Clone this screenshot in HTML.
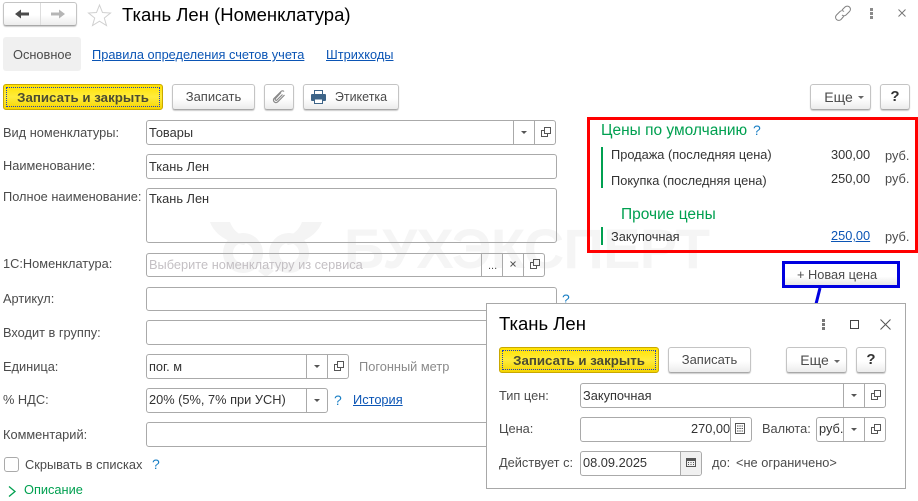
<!DOCTYPE html>
<html lang="ru"><head><meta charset="utf-8"><title>Ткань Лен</title>
<style>
html,body{margin:0;padding:0;background:#fff}
#p{position:relative;width:918px;height:501px;overflow:hidden;background:#fff;font-family:"Liberation Sans",Arial,sans-serif;font-size:12.8px;color:#4b4b4b}
.t{position:absolute;line-height:16px;white-space:nowrap}
.d{color:#333}
.a{color:#0b55b5;text-decoration:underline}
.g{color:#00a050}
.q{color:#1a7fc4;font-size:14px}
.f{position:absolute;box-sizing:border-box;border:1px solid #aaa;border-radius:3px}
.v{position:absolute;width:1px;background:#aaa}
.b{position:absolute;box-sizing:border-box;border:1px solid #c4c4c4;border-bottom:1px solid #a8a8a8;border-radius:3px;background:linear-gradient(#fff 0,#fff 55%,#ececec 100%);box-shadow:0 1px 1px #ccc;text-align:center;line-height:24px;font-size:13px;color:#4b4b4b}
.y{position:absolute;box-sizing:border-box;border:1px solid #c9a800;border-radius:3px;background:linear-gradient(#ffe100,#ffec3d 50%,#f5d400);text-align:center;font-weight:bold;font-size:13.300px;color:#4b4b30;line-height:20px}
.y i{position:absolute;left:2px;right:2px;top:2px;bottom:2px;border:1px dotted #1f3fc0;font-style:normal}
svg{position:absolute;overflow:visible}
</style></head><body><div id="p">

<!-- watermark -->
<svg style="left:0;top:0" width="918" height="501" fill="none">
<g stroke="#f4f4f4" stroke-width="10"><circle cx="243" cy="253" r="15"/><circle cx="289" cy="253" r="15"/></g>
<path d="M210 222h20c4 10 10 13 20 17l-6 6c-17-3-29-10-34-23zM322 222h-20c-4 10-10 13-20 17l6 6c17-3 29-10 34-23zM266 264l8 7-8 6-8-6z" fill="#f4f4f4"/>
<text x="344" y="268" font-family="Liberation Sans" font-weight="bold" font-size="56" fill="#f5f5f5" textLength="366">БУХЭКСПЕРТ</text>
</svg>

<!-- top nav -->
<div class="b" style="left:3px;top:2px;width:74px;height:24px"></div>
<div class="v" style="left:40px;top:3px;height:22px;background:#ddd"></div>
<svg style="left:15px;top:9px" width="15" height="10"><path d="M0 5l6-4.500V3.500h8v3H6v3z" fill="#4a4a4a"/></svg>
<svg style="left:51px;top:9px" width="15" height="10"><path d="M14 5L8 .5V3.500H0v3h8v3z" fill="#b5b5b5"/></svg>
<svg style="left:88px;top:4px" width="24" height="22"><path d="M11.500 1l3 7.500 8 .5-6.200 5 2.200 7.500-7-4.300-7 4.300L6.700 14 .5 9l8-.5z" fill="#fff" stroke="#d0d0d0"/></svg>
<div class="t" style="left:122px;top:4px;font-size:18.500px;line-height:22px;color:#000">Ткань Лен (Номенклатура)</div>

<svg style="left:835px;top:5px" width="16" height="17" fill="none" stroke="#808080"><path d="M7 5l3-3a3 3 0 0 1 4.500 4.500l-3.500 3.500a3 3 0 0 1-4 0M9 11l-3 3.500A3 3 0 0 1 1.500 10L5 6.500a3 3 0 0 1 4 0"/></svg>
<svg style="left:870px;top:8px" width="5" height="12"><g fill="#8a8a8a"><rect x="0" y="0" width="3" height="3"/><rect x="0" y="4" width="3" height="3"/><rect x="0" y="8" width="3" height="3"/></g></svg>
<svg style="left:898px;top:9px" width="9" height="9" stroke="#777" fill="none"><path d="M.5.500l7 7M7.500.500l-7 7"/></svg>

<!-- tabs -->
<div style="position:absolute;left:3px;top:37px;width:78px;height:34px;background:#f0f0f0;border-radius:3px"></div>
<div class="t" style="left:13px;top:47px;">Основное</div>
<div class="t a" style="left:92px;top:47px">Правила определения счетов учета</div>
<div class="t a" style="left:326px;top:47px">Штрихкоды</div>

<!-- command bar -->
<div class="y" style="left:3px;top:84px;width:160px;height:26px"><i>Записать и закрыть</i></div>
<div class="b" style="left:172px;top:84px;width:83px;height:26px">Записать</div>
<div class="b" style="left:264px;top:84px;width:30px;height:26px"></div>
<svg style="left:272px;top:90px" width="14" height="14" fill="none" stroke="#8a8a8a" stroke-width="1.200"><path d="M12 1.500a2 2 0 0 0-3 0L2 8.500a2.500 2.500 0 0 0 3.500 3.500L12.500 5M9 2.500L3.500 8.500a1 1 0 0 0 1.500 1.500L10.500 4.500a1 1 0 0 1 0 0"/></svg>
<div class="b" style="left:303px;top:84px;width:96px;height:26px;padding-left:20px;font-size:12.500px">Этикетка</div>
<svg style="left:311px;top:90px" width="15" height="14"><path d="M3.500.5h8v4h-8z" fill="#fff" stroke="#3d6488"/><rect x="0" y="4" width="15" height="7" rx="1" fill="#3d6488"/><rect x="3.500" y="9" width="8" height="4.500" fill="#fff" stroke="#3d6488"/></svg>
<div class="b" style="left:810px;top:84px;width:61px;height:26px;padding-right:4px;font-size:14px">Еще</div>
<svg style="left:858px;top:96px" width="7" height="4"><path d="M0 0h6L3 3z" fill="#666"/></svg>
<div class="b" style="left:880px;top:84px;width:30px;height:26px;font-size:15px;font-weight:bold;color:#333">?</div>

<!-- left labels -->
<div class="t" style="left:3px;top:125px">Вид номенклатуры:</div>
<div class="t" style="left:3px;top:158px">Наименование:</div>
<div class="t" style="left:3px;top:189px">Полное наименование:</div>
<div class="t" style="left:3px;top:256px">1С:Номенклатура:</div>
<div class="t" style="left:3px;top:291px">Артикул:</div>
<div class="t" style="left:3px;top:325px">Входит в группу:</div>
<div class="t" style="left:3px;top:359px">Единица:</div>
<div class="t" style="left:3px;top:392px">% НДС:</div>
<div class="t" style="left:3px;top:427px">Комментарий:</div>

<!-- fields -->
<div class="f" style="left:146px;top:120px;width:410px;height:25px"></div>
<div class="v" style="left:513px;top:120px;height:25px"></div><div class="v" style="left:534px;top:120px;height:25px"></div>
<svg style="left:521px;top:131px" width="7" height="4"><path d="M0 0h6L3 3z" fill="#555"/></svg>
<svg style="left:541px;top:127px" width="11" height="11" fill="none" stroke="#555"><path d="M3.500.500h6v6h-6zM3.500 3.500H.5v6h6V6.500"/></svg>
<div class="t d" style="left:149px;top:125px">Товары</div>

<div class="f" style="left:146px;top:154px;width:411px;height:25px"></div>
<div class="t d" style="left:149px;top:159px">Ткань Лен</div>

<div class="f" style="left:146px;top:188px;width:411px;height:55px"></div>
<div class="t d" style="left:149px;top:191px">Ткань Лен</div>

<div class="f" style="left:146px;top:253px;width:399px;height:24px"></div>
<div class="v" style="left:481px;top:253px;height:24px"></div><div class="v" style="left:502px;top:253px;height:24px"></div><div class="v" style="left:523px;top:253px;height:24px"></div>
<div class="t" style="left:149px;top:257px;color:#c4c0c4">Выберите номенклатуру из сервиса</div>
<div class="t" style="left:488px;top:258px;font-size:11px">...</div>
<svg style="left:510px;top:261px" width="7" height="7" stroke="#555" fill="none"><path d="M.5.500l5 5M5.500.500l-5 5"/></svg>
<svg style="left:530px;top:259px" width="11" height="11" fill="none" stroke="#555"><path d="M3.500.500h6v6h-6zM3.500 3.500H.5v6h6V6.500"/></svg>

<div class="f" style="left:146px;top:287px;width:411px;height:24px"></div>
<div class="t q" style="left:562px;top:291px">?</div>
<div class="f" style="left:146px;top:320px;width:411px;height:25px"></div>

<div class="f" style="left:146px;top:354px;width:203px;height:25px"></div>
<div class="v" style="left:306px;top:354px;height:25px"></div><div class="v" style="left:327px;top:354px;height:25px"></div>
<svg style="left:314px;top:365px" width="7" height="4"><path d="M0 0h6L3 3z" fill="#555"/></svg>
<svg style="left:334px;top:361px" width="11" height="11" fill="none" stroke="#555"><path d="M3.500.500h6v6h-6zM3.500 3.500H.5v6h6V6.500"/></svg>
<div class="t d" style="left:149px;top:359px">пог. м</div>
<div class="t" style="left:359px;top:359px;color:#8a8a8a">Погонный метр</div>

<div class="f" style="left:146px;top:388px;width:182px;height:25px"></div>
<div class="v" style="left:306px;top:388px;height:25px"></div>
<svg style="left:314px;top:399px" width="7" height="4"><path d="M0 0h6L3 3z" fill="#555"/></svg>
<div class="t d" style="left:149px;top:392px">20% (5%, 7% при УСН)</div>
<div class="t q" style="left:334px;top:392px">?</div>
<div class="t a" style="left:353px;top:392px">История</div>

<div class="f" style="left:146px;top:422px;width:411px;height:25px"></div>

<div class="f" style="left:4px;top:457px;width:15px;height:15px"></div>
<div class="t" style="left:25px;top:457px">Скрывать в списках</div>
<div class="t q" style="left:152px;top:456px">?</div>
<svg style="left:8px;top:486px" width="9" height="11" fill="none" stroke="#00a050" stroke-width="1.300"><path d="M1 .5l6 5-6 5"/></svg>
<div class="t g" style="left:24px;top:482px">Описание</div>

<!-- red box -->
<div style="position:absolute;box-sizing:border-box;left:587px;top:117px;width:331px;height:136px;border:3px solid #f00"></div>
<div class="t g" style="left:601px;top:122px;font-size:15.500px;line-height:18px">Цены по умолчанию</div>
<div class="t q" style="left:753px;top:122px">?</div>
<div style="position:absolute;left:601px;top:147px;width:2px;height:41px;background:#00a050"></div>
<div class="t" style="left:611px;top:147px;color:#333">Продажа (последняя цена)</div>
<div class="t d" style="left:831px;top:147px">300,00</div>
<div class="t" style="left:885px;top:148px">руб.</div>
<div class="t" style="left:611px;top:173px;color:#333">Покупка (последняя цена)</div>
<div class="t d" style="left:831px;top:171px">250,00</div>
<div class="t" style="left:885px;top:171px">руб.</div>
<div class="t g" style="left:621px;top:206px;font-size:15.500px;line-height:18px">Прочие цены</div>
<div style="position:absolute;left:601px;top:227px;width:2px;height:18px;background:#00a050"></div>
<div class="t d" style="left:611px;top:229px">Закупочная</div>
<div class="t a" style="left:831px;top:228px">250,00</div>
<div class="t" style="left:885px;top:229px">руб.</div>

<!-- blue box -->
<div style="position:absolute;box-sizing:border-box;left:782px;top:261px;width:118px;height:27px;border:3px solid #0000e0;background:linear-gradient(#fff 60%,#e6e6e6)"></div>
<div class="t" style="left:797px;top:267px">+ Новая цена</div>
<svg style="left:812px;top:287px" width="12" height="18"><path d="M8 1L4 17" stroke="#0000e0" stroke-width="3" fill="none"/></svg>

<!-- dialog -->
<div style="position:absolute;box-sizing:border-box;left:486px;top:303px;width:420px;height:186px;background:#fff;border:1px solid #a8a8a8"></div>
<div class="t" style="left:499px;top:313px;font-size:18.500px;line-height:22px;color:#000">Ткань Лен</div>
<svg style="left:822px;top:319px" width="4" height="12"><g fill="#777"><rect width="3" height="3"/><rect y="4" width="3" height="3"/><rect y="8" width="3" height="3"/></g></svg>
<svg style="left:850px;top:320px" width="10" height="10" fill="none" stroke="#444"><rect x=".5" y=".5" width="8" height="8"/></svg>
<svg style="left:880px;top:319px" width="11" height="11" fill="none" stroke="#555"><path d="M.5.500l10 10M10.500.500l-10 10"/></svg>

<div class="y" style="left:499px;top:347px;width:160px;height:26px"><i>Записать и закрыть</i></div>
<div class="b" style="left:668px;top:347px;width:83px;height:26px">Записать</div>
<div class="b" style="left:786px;top:347px;width:61px;height:26px;padding-right:4px;font-size:14px">Еще</div>
<svg style="left:834px;top:360px" width="7" height="4"><path d="M0 0h6L3 3z" fill="#666"/></svg>
<div class="b" style="left:856px;top:347px;width:30px;height:26px;font-size:15px;font-weight:bold;color:#333">?</div>

<div class="t" style="left:499px;top:388px">Тип цен:</div>
<div class="f" style="left:580px;top:383px;width:306px;height:25px"></div>
<div class="v" style="left:843px;top:383px;height:25px"></div><div class="v" style="left:864px;top:383px;height:25px"></div>
<svg style="left:851px;top:394px" width="7" height="4"><path d="M0 0h6L3 3z" fill="#555"/></svg>
<svg style="left:871px;top:390px" width="11" height="11" fill="none" stroke="#555"><path d="M3.500.500h6v6h-6zM3.500 3.500H.5v6h6V6.500"/></svg>
<div class="t d" style="left:583px;top:388px">Закупочная</div>

<div class="t" style="left:499px;top:421px">Цена:</div>
<div class="f" style="left:580px;top:417px;width:172px;height:25px"></div>
<div class="v" style="left:730px;top:417px;height:25px"></div>
<div class="t d" style="left:691px;top:421px">270,00</div>
<svg style="left:735px;top:423px" width="11" height="12" fill="none" stroke="#555"><rect x=".5" y=".5" width="9" height="10"/><path d="M2 3h6M2 5.500h6M2 8h6" stroke-dasharray="1.500 .8"/></svg>
<div class="t" style="left:762px;top:421px">Валюта:</div>
<div class="f" style="left:816px;top:417px;width:70px;height:25px"></div>
<div class="v" style="left:843px;top:417px;height:25px"></div><div class="v" style="left:864px;top:417px;height:25px"></div>
<div class="t d" style="left:819px;top:421px;width:24px;overflow:hidden">руб.</div>
<svg style="left:851px;top:428px" width="7" height="4"><path d="M0 0h6L3 3z" fill="#555"/></svg>
<svg style="left:871px;top:424px" width="11" height="11" fill="none" stroke="#555"><path d="M3.500.500h6v6h-6zM3.500 3.500H.5v6h6V6.500"/></svg>

<div class="t" style="left:499px;top:455px">Действует с:</div>
<div class="f" style="left:580px;top:451px;width:122px;height:25px"></div>
<div style="position:absolute;left:680px;top:452px;width:21px;height:23px;background:#f0f0f0;border-left:1px solid #aaa;box-sizing:border-box;border-radius:0 3px 3px 0"></div>
<svg style="left:686px;top:457px" width="11" height="11"><rect x="0" y="1" width="10" height="9" fill="#555"/><rect x="1" y="4" width="8" height="5" fill="#f0f0f0"/><path d="M2 5h1v1H2zM4.500 5h1v1h-1zM7 5h1v1H7zM2 7h1v1H2zM4.500 7h1v1h-1zM7 7h1v1H7z" fill="#555"/></svg>
<div class="t d" style="left:583px;top:455px">08.09.2025</div>
<div class="t" style="left:712px;top:455px">до:</div>
<div class="t" style="left:736px;top:455px">&lt;не ограничено&gt;</div>

</div></body></html>
